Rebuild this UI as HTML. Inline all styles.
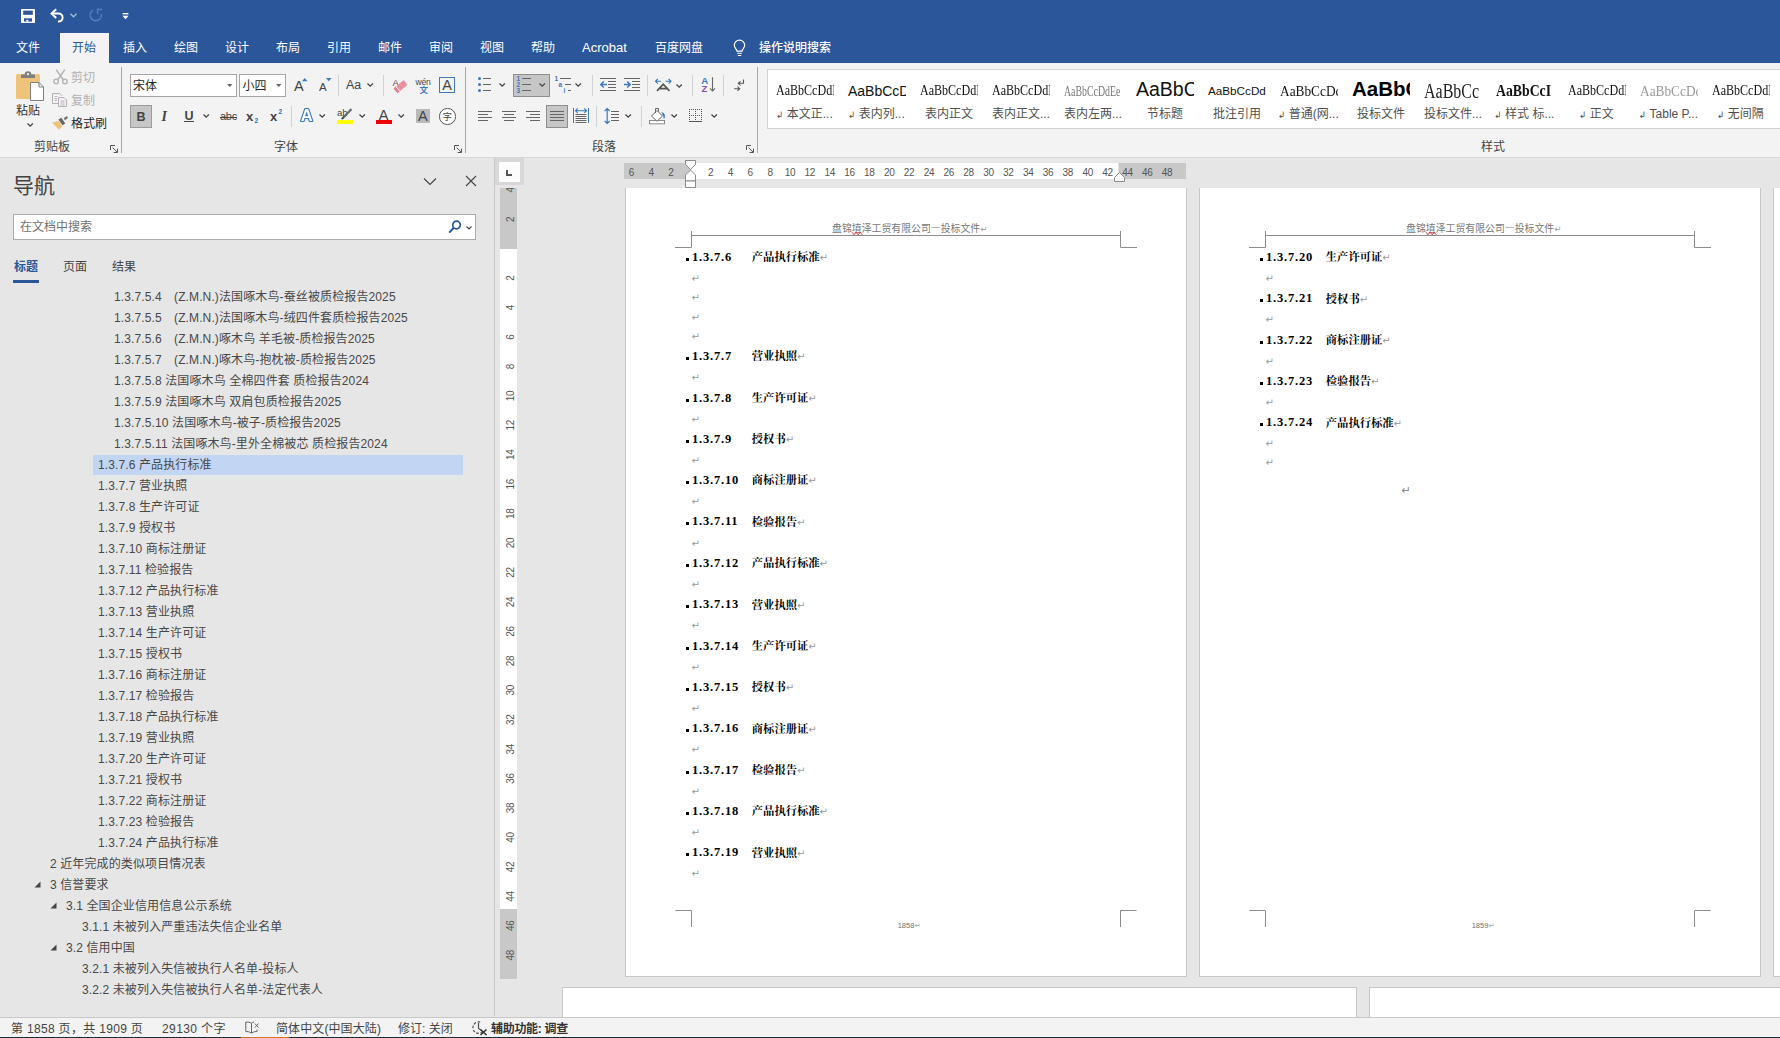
<!DOCTYPE html>
<html lang="zh-CN"><head><meta charset="utf-8"><title>Word</title>
<style>
html,body{margin:0;padding:0;}
body{width:1780px;height:1038px;overflow:hidden;background:#e6e6e6;font-family:"Liberation Sans","Noto Sans CJK SC",sans-serif;font-size:12px;color:#444;position:relative;}
.r{position:absolute;box-sizing:border-box;}
.t{position:absolute;white-space:nowrap;box-sizing:border-box;}
.s{font-family:"Liberation Serif","Noto Serif CJK SC",serif;}
svg{overflow:visible;}
</style></head><body>

<div class="r" style="left:0px;top:0px;width:1780px;height:63px;background:#2b579a;"></div>
<div class="r" style="left:60px;top:33px;width:49px;height:30px;background:#f3f3f3;"></div>
<div class="t " style="left:16px;top:39.2px;height:18px;line-height:18px;font-size:12px;color:#fff;">文件</div>
<div class="t " style="left:72px;top:39.2px;height:18px;line-height:18px;font-size:12px;color:#2b579a;">开始</div>
<div class="t " style="left:123px;top:39.2px;height:18px;line-height:18px;font-size:12px;color:#fff;">插入</div>
<div class="t " style="left:174px;top:39.2px;height:18px;line-height:18px;font-size:12px;color:#fff;">绘图</div>
<div class="t " style="left:225px;top:39.2px;height:18px;line-height:18px;font-size:12px;color:#fff;">设计</div>
<div class="t " style="left:276px;top:39.2px;height:18px;line-height:18px;font-size:12px;color:#fff;">布局</div>
<div class="t " style="left:327px;top:39.2px;height:18px;line-height:18px;font-size:12px;color:#fff;">引用</div>
<div class="t " style="left:378px;top:39.2px;height:18px;line-height:18px;font-size:12px;color:#fff;">邮件</div>
<div class="t " style="left:429px;top:39.2px;height:18px;line-height:18px;font-size:12px;color:#fff;">审阅</div>
<div class="t " style="left:480px;top:39.2px;height:18px;line-height:18px;font-size:12px;color:#fff;">视图</div>
<div class="t " style="left:531px;top:39.2px;height:18px;line-height:18px;font-size:12px;color:#fff;">帮助</div>
<div class="t " style="left:655px;top:39.2px;height:18px;line-height:18px;font-size:12px;color:#fff;">百度网盘</div>
<div class="t " style="left:759px;top:39.2px;height:18px;line-height:18px;font-size:12px;color:#fff;font-weight:500;">操作说明搜索</div>
<div class="t " style="left:582px;top:37.9px;height:19px;line-height:19px;font-size:13px;color:#fff;">Acrobat</div>
<svg class="r" style="left:21px;top:9px;" width="14" height="14" viewBox="0 0 14 14"><rect x="0" y="0" width="14" height="14" rx="0.6" fill="#fff"/><rect x="2.2" y="1.6" width="9.6" height="4.2" fill="#2b579a"/><rect x="3" y="9.3" width="8" height="3.3" fill="#2b579a"/><rect x="5.2" y="10.9" width="2.2" height="1.7" fill="#fff"/></svg>
<svg class="r" style="left:50px;top:8px;" width="15" height="15" viewBox="0 0 15 15"><path d="M2 5.6h6.6a4 4 0 0 1 0 8H8" fill="none" stroke="#fff" stroke-width="2"/><path d="M6.2 1.2L1.6 5.6l4.6 4.4" fill="none" stroke="#fff" stroke-width="2"/></svg>
<svg class="r" style="left:70px;top:13px;" width="7" height="5" viewBox="0 0 7 5"><path d="M0.5 0.8L3.5 3.8L6.5 0.8" fill="none" stroke="#a9bcdc" stroke-width="1.3"/></svg>
<svg class="r" style="left:89px;top:8px;" width="14" height="15" viewBox="0 0 14 15"><path d="M4 2.2A5.6 5.6 0 1 0 12.3 6" fill="none" stroke="#4f7bbd" stroke-width="1.7"/><path d="M8.6 6V1.4h4.6" fill="none" stroke="#4f7bbd" stroke-width="1.6"/></svg>
<svg class="r" style="left:122px;top:12px;" width="7" height="8" viewBox="0 0 7 8"><path d="M0.6 1.7h5.8" stroke="#fff" stroke-width="1.4"/><path d="M0.4 3.8h6.2L3.5 7.2z" fill="#fff"/></svg>
<svg class="r" style="left:733px;top:40px;" width="13" height="17" viewBox="0 0 13 17"><path d="M4 11.2c0-2-2.7-3-2.7-5.9a5.2 5.2 0 0 1 10.4 0c0 2.9-2.7 3.9-2.7 5.900z" fill="none" stroke="#fff" stroke-width="1.2"/><path d="M4.2 13.3h4.6M4.8 15.5h3.4" stroke="#fff" stroke-width="1.1"/></svg>
<div class="r" style="left:0px;top:63px;width:1780px;height:94px;background:#f3f3f3;"></div>
<div class="r" style="left:0px;top:157px;width:1780px;height:1px;background:#d6d6d6;"></div>
<svg class="r" style="left:16px;top:71px;" width="28" height="30" viewBox="0 0 28 30"><rect x="0" y="3" width="24" height="25" rx="1.4" fill="#eec47c"/><path d="M5 7V4.6Q5 3.6 6 3.6H8.7A3.3 3.3 0 0 1 15.3 3.600H18Q19 3.600 19 4.600V7z" fill="#7f7f7f"/><circle cx="12" cy="3.200" r="1.1" fill="#f3f3f3"/><path d="M14.500 11.500H23L27.500 16V29.500H14.500z" fill="#fff" stroke="#7f7f7f" stroke-width="1"/><path d="M23 11.500V16H27.500" fill="none" stroke="#7f7f7f" stroke-width="1"/></svg>
<div class="t " style="left:16px;top:102.2px;height:18px;line-height:18px;font-size:12px;color:#333;">粘贴</div>
<svg class="r" style="left:26.5px;top:123.2px;" width="6.4" height="4" viewBox="0 0 6.4 4"><path d="M0.5 0.5L3.2 3.2L5.900 0.5" fill="none" stroke="#444" stroke-width="1.25"/></svg>
<svg class="r" style="left:52.5px;top:69px;" width="15" height="15.5" viewBox="0 0 15 15.5"><path d="M3.200 0.600L10.600 11.200M11.800 0.600L4.400 11.200" stroke="#b3b1b3" stroke-width="1.5" fill="none"/><circle cx="3.100" cy="12.400" r="2.300" fill="none" stroke="#b3b1b3" stroke-width="1.300"/><circle cx="11.900" cy="12.400" r="2.300" fill="none" stroke="#b3b1b3" stroke-width="1.300"/></svg>
<div class="t " style="left:71px;top:69.3px;height:18px;line-height:18px;font-size:12px;color:#b1b1b1;">剪切</div>
<svg class="r" style="left:52px;top:93px;" width="15.5" height="14.5" viewBox="0 0 15.5 14.5"><path d="M9.500 3V2.500L7.500 0.500H0.500V10.500H6.500" fill="#f8f0f8" stroke="#b3b1b3" stroke-width="1"/><path d="M6.500 4.500H12L14.500 7V13.500H6.500z" fill="#f8f0f8" stroke="#b3b1b3" stroke-width="1"/><path d="M2.500 3.500H5.500M2.500 5.500H5M2.500 7.500H5M8.500 8H12.500M8.500 10H12.500M8.500 12H12.500" stroke="#b3b1b3" stroke-width="0.9"/></svg>
<div class="t " style="left:71px;top:92.1px;height:18px;line-height:18px;font-size:12px;color:#b1b1b1;">复制</div>
<svg class="r" style="left:52px;top:116px;" width="16.5" height="14" viewBox="0 0 16.5 14"><path d="M0 6.800L6.500 4.800L10.300 10.200L7 13.800z" fill="#eec47c"/><path d="M6.400 3.400L9.300 1.700L13.300 7.400L10.500 9.300z" fill="#666"/><path d="M11.600 2.300L14.800 0L16.200 2L13 4.300z" fill="#7a7a7a"/></svg>
<div class="t " style="left:71px;top:115.0px;height:18px;line-height:18px;font-size:12px;color:#262626;">格式刷</div>
<div class="t " style="left:34px;top:138.2px;height:18px;line-height:18px;font-size:12px;color:#444;">剪贴板</div>
<svg class="r" style="left:110px;top:145px;" width="8" height="8" viewBox="0 0 8 8"><path d="M0.5 5V0.5H5" fill="none" stroke="#555" stroke-width="1"/><path d="M2.6 2.6L7 7M7.5 3.6V7.5H3.6" fill="none" stroke="#555" stroke-width="1"/></svg>
<div class="r" style="left:121px;top:67px;width:1px;height:86px;background:#a8a8a8;"></div>
<div class="r" style="left:130px;top:74px;width:107px;height:23px;background:#fff;border:1px solid #a6a6a6;"></div>
<div class="t " style="left:133px;top:77.3px;height:18px;line-height:18px;font-size:12px;color:#262626;">宋体</div>
<svg class="r" style="left:227px;top:84px;" width="5.5" height="3" viewBox="0 0 5.5 3"><path d="M0 0H5.500L2.750 3z" fill="#666"/></svg>
<div class="r" style="left:239px;top:74px;width:47px;height:23px;background:#fff;border:1px solid #a6a6a6;"></div>
<div class="t " style="left:242.5px;top:77.3px;height:18px;line-height:18px;font-size:12px;color:#262626;">小四</div>
<svg class="r" style="left:276px;top:84px;" width="5.5" height="3" viewBox="0 0 5.5 3"><path d="M0 0H5.500L2.750 3z" fill="#666"/></svg>
<div class="r" style="left:130px;top:105px;width:22px;height:23px;background:#c6c6c6;border:1px solid #9c9c9c;"></div>
<div class="t " style="left:136.5px;top:107.5px;height:18.5px;line-height:18.5px;font-size:12.5px;color:#444;font-weight:bold;">B</div>
<div class="t " style="left:161.5px;top:106.7px;height:20px;line-height:20px;font-size:14px;color:#444;font-weight:bold;font-style:italic;font-family:'Liberation Serif',serif;">I</div>
<div class="t " style="left:184.5px;top:106.8px;height:18.5px;line-height:18.5px;font-size:12.5px;color:#444;font-weight:bold;">U</div>
<div class="r" style="left:184px;top:121px;width:9.5px;height:1px;background:#444;"></div>
<svg class="r" style="left:203.3px;top:113.9px;" width="6.4" height="4" viewBox="0 0 6.4 4"><path d="M0.5 0.5L3.2 3.2L5.900 0.5" fill="none" stroke="#444" stroke-width="1.25"/></svg>
<div class="t " style="left:220px;top:108.2px;height:17px;line-height:17px;font-size:11px;color:#444;letter-spacing:-0.300px;">abc</div>
<div class="r" style="left:219.5px;top:116.5px;width:17.5px;height:1px;background:#444;"></div>
<div class="t " style="left:246px;top:106.7px;height:19px;line-height:19px;font-size:13px;color:#444;font-weight:bold;">x</div>
<div class="t " style="left:254.5px;top:114.5px;height:12.5px;line-height:12.5px;font-size:6.5px;color:#2b6cbf;font-weight:bold;">2</div>
<div class="t " style="left:270px;top:106.7px;height:19px;line-height:19px;font-size:13px;color:#444;font-weight:bold;">x</div>
<div class="t " style="left:278.5px;top:106.0px;height:12.5px;line-height:12.5px;font-size:6.5px;color:#2b6cbf;font-weight:bold;">2</div>
<div class="r" style="left:291px;top:106px;width:1px;height:21px;background:#d1d1d1;"></div>
<div class="t " style="left:294px;top:76.2px;height:20.5px;line-height:20.5px;font-size:14.5px;color:#444;">A</div>
<svg class="r" style="left:302px;top:78px;" width="5.5" height="3.2" viewBox="0 0 5.5 3.2"><path d="M0 3.2H5.5L2.75 0z" fill="#3a78c0"/></svg>
<div class="t " style="left:319px;top:79.0px;height:17.5px;line-height:17.5px;font-size:11.5px;color:#444;">A</div>
<svg class="r" style="left:326px;top:78px;" width="5.5" height="3.2" viewBox="0 0 5.5 3.2"><path d="M0 0H5.5L2.75 3.2z" fill="#3a78c0"/></svg>
<div class="r" style="left:338px;top:75px;width:1px;height:21px;background:#d1d1d1;"></div>
<div class="t " style="left:346px;top:76.0px;height:18.5px;line-height:18.5px;font-size:12.5px;color:#444;">Aa</div>
<svg class="r" style="left:366.6px;top:83.10000000000001px;" width="6.4" height="4" viewBox="0 0 6.4 4"><path d="M0.5 0.5L3.2 3.2L5.900 0.5" fill="none" stroke="#444" stroke-width="1.25"/></svg>
<div class="r" style="left:383px;top:75px;width:1px;height:21px;background:#d1d1d1;"></div>
<div class="t " style="left:392.5px;top:75.0px;height:15.5px;line-height:15.5px;font-size:9.5px;color:#555;">A</div>
<svg class="r" style="left:393px;top:80px;" width="15" height="13" viewBox="0 0 15 13"><g transform="rotate(-40 7.500 6.500)"><rect x="1" y="3.500" width="13" height="6.200" rx="1" fill="#e8909e"/><rect x="1" y="3.500" width="3" height="6.200" rx="1" fill="#e47f90"/><rect x="3.600" y="3.500" width="0.900" height="6.200" fill="#f3f3f3"/></g></svg>
<div class="t " style="left:415.5px;top:74.7px;height:14.5px;line-height:14.5px;font-size:8.5px;color:#444;letter-spacing:-0.2px;">wén</div>
<div class="t " style="left:419.5px;top:83.2px;height:14.5px;line-height:14.5px;font-size:8.5px;color:#3a78c0;font-weight:bold;">文</div>
<div class="r" style="left:439px;top:77px;width:16px;height:16px;border:1px solid #3f78bd;"></div>
<div class="t " style="left:442.2px;top:74.8px;height:20.5px;line-height:20.5px;font-size:14.5px;color:#444;">A</div>
<svg class="r" style="left:0px;top:0px;" width="1" height="1" viewBox="0 0 1 1"><text x="300.800" y="121.300" font-size="16.500" font-weight="bold" font-family="Liberation Sans,sans-serif" fill="#fff" stroke="#3a78c0" stroke-width="2.200" stroke-linejoin="round" paint-order="stroke" style="filter:drop-shadow(0 0 0.600px #8fb6e6)">A</text></svg>
<svg class="r" style="left:319.3px;top:114.10000000000001px;" width="6.4" height="4" viewBox="0 0 6.4 4"><path d="M0.5 0.5L3.2 3.2L5.900 0.5" fill="none" stroke="#444" stroke-width="1.25"/></svg>
<div class="t " style="left:337px;top:105.0px;height:15.5px;line-height:15.5px;font-size:9.5px;color:#444;">ab</div>
<svg class="r" style="left:340px;top:108px;" width="13" height="12" viewBox="0 0 13 12"><path d="M11.500 1L2.500 10.500" stroke="#6a6a6a" stroke-width="2.200"/><path d="M3.800 8.600L1.600 11.200" stroke="#444" stroke-width="1.400"/></svg>
<div class="r" style="left:337px;top:120px;width:16px;height:4px;background:#ffff00;"></div>
<svg class="r" style="left:359.3px;top:114.10000000000001px;" width="6.4" height="4" viewBox="0 0 6.4 4"><path d="M0.5 0.5L3.2 3.2L5.900 0.5" fill="none" stroke="#444" stroke-width="1.25"/></svg>
<div class="t " style="left:378.7px;top:104.5px;height:20.5px;line-height:20.5px;font-size:14.5px;color:#444;">A</div>
<div class="r" style="left:376px;top:120px;width:16px;height:4px;background:#ec0000;"></div>
<svg class="r" style="left:398.3px;top:114.10000000000001px;" width="6.4" height="4" viewBox="0 0 6.4 4"><path d="M0.5 0.5L3.2 3.2L5.900 0.5" fill="none" stroke="#444" stroke-width="1.25"/></svg>
<div class="r" style="left:416px;top:109px;width:14px;height:14px;background:#b9b9b9;"></div>
<div class="t " style="left:418px;top:105.5px;height:20.5px;line-height:20.5px;font-size:14.5px;color:#444;">A</div>
<div class="r" style="left:439px;top:108px;width:16.5px;height:16.5px;background:#fff;border:1px solid #555;border-radius:50%;"></div>
<div class="t " style="left:442.7px;top:110.0px;height:15px;line-height:15px;font-size:9px;color:#444;">字</div>
<div class="t " style="left:274px;top:138.2px;height:18px;line-height:18px;font-size:12px;color:#444;">字体</div>
<svg class="r" style="left:454px;top:145px;" width="8" height="8" viewBox="0 0 8 8"><path d="M0.5 5V0.5H5" fill="none" stroke="#555" stroke-width="1"/><path d="M2.6 2.6L7 7M7.5 3.6V7.5H3.6" fill="none" stroke="#555" stroke-width="1"/></svg>
<div class="r" style="left:465px;top:67px;width:1px;height:86px;background:#a8a8a8;"></div>
<svg class="r" style="left:0px;top:0px;" width="1" height="1" viewBox="0 0 1 1"><circle cx="479.5" cy="78.5" r="1.5" fill="#3a78c0"/><path d="M483 78.5H491" stroke="#666" stroke-width="1"/><circle cx="479.5" cy="84.5" r="1.5" fill="#3a78c0"/><path d="M483 84.5H491" stroke="#666" stroke-width="1"/><circle cx="479.5" cy="90.5" r="1.5" fill="#3a78c0"/><path d="M483 90.5H491" stroke="#666" stroke-width="1"/></svg>
<svg class="r" style="left:499.3px;top:83.3px;" width="6.4" height="4" viewBox="0 0 6.4 4"><path d="M0.5 0.5L3.2 3.2L5.900 0.5" fill="none" stroke="#444" stroke-width="1.25"/></svg>
<div class="r" style="left:513px;top:74px;width:37px;height:23px;background:#c6c6c6;border:1px solid #8e8e8e;"></div>
<svg class="r" style="left:0px;top:0px;" width="1" height="1" viewBox="0 0 1 1"><text x="516.5" y="80.9" font-size="6.5" font-weight="bold" fill="#3a78c0" font-family="Liberation Sans,sans-serif">1</text><path d="M522 78.5H531" stroke="#666" stroke-width="1"/><text x="516.5" y="86.9" font-size="6.5" font-weight="bold" fill="#3a78c0" font-family="Liberation Sans,sans-serif">2</text><path d="M522 84.5H531" stroke="#666" stroke-width="1"/><text x="516.5" y="92.9" font-size="6.5" font-weight="bold" fill="#3a78c0" font-family="Liberation Sans,sans-serif">3</text><path d="M522 90.5H531" stroke="#666" stroke-width="1"/></svg>
<svg class="r" style="left:538.5999999999999px;top:83.3px;" width="6.4" height="4" viewBox="0 0 6.4 4"><path d="M0.5 0.5L3.2 3.2L5.900 0.5" fill="none" stroke="#444" stroke-width="1.25"/></svg>
<svg class="r" style="left:0px;top:0px;" width="1" height="1" viewBox="0 0 1 1"><text x="554.5" y="81" font-size="6.5" font-weight="bold" fill="#3a78c0" font-family="Liberation Sans,sans-serif">1</text><path d="M560 78.5H571" stroke="#666" stroke-width="1"/><text x="558.5" y="86.5" font-size="6.5" font-weight="bold" fill="#3a78c0" font-family="Liberation Sans,sans-serif">a</text><path d="M565 84.5H571" stroke="#666" stroke-width="1"/><text x="563.5" y="92.5" font-size="6.5" font-weight="bold" fill="#3a78c0" font-family="Liberation Sans,sans-serif">i</text><path d="M568 90.5H571" stroke="#666" stroke-width="1"/></svg>
<svg class="r" style="left:575.3px;top:83.3px;" width="6.4" height="4" viewBox="0 0 6.4 4"><path d="M0.5 0.5L3.2 3.2L5.900 0.5" fill="none" stroke="#444" stroke-width="1.25"/></svg>
<div class="r" style="left:592px;top:75px;width:1px;height:21px;background:#d1d1d1;"></div>
<svg class="r" style="left:0px;top:0px;" width="1" height="1" viewBox="0 0 1 1"><path d="M600 78.5H616" stroke="#666" stroke-width="1"/><path d="M608 81.5H616" stroke="#666" stroke-width="1"/><path d="M608 84.5H616" stroke="#666" stroke-width="1"/><path d="M608 87.5H616" stroke="#666" stroke-width="1"/><path d="M600 90.5H616" stroke="#666" stroke-width="1"/><path d="M607 84.500H601M603.800 81.500L600.800 84.500L603.800 87.500" fill="none" stroke="#3a78c0" stroke-width="1.500"/><path d="M624 78.5H640" stroke="#666" stroke-width="1"/><path d="M632 81.5H640" stroke="#666" stroke-width="1"/><path d="M632 84.5H640" stroke="#666" stroke-width="1"/><path d="M632 87.5H640" stroke="#666" stroke-width="1"/><path d="M624 90.5H640" stroke="#666" stroke-width="1"/><path d="M624 84.500H630M627.200 81.500L630.200 84.500L627.200 87.500" fill="none" stroke="#3a78c0" stroke-width="1.500"/></svg>
<div class="r" style="left:647px;top:75px;width:1px;height:21px;background:#d1d1d1;"></div>
<svg class="r" style="left:0px;top:0px;" width="1" height="1" viewBox="0 0 1 1"><path d="M655.500 81.300H661M657.800 79L655.500 81.300L657.800 83.600M665.500 81.300H671M668.700 79L671 81.300L668.700 83.600" fill="none" stroke="#3a78c0" stroke-width="1.100"/><path d="M657 90.800L663.200 84.200L669.500 90.800M659.500 88.700H667" fill="none" stroke="#555" stroke-width="1.700"/></svg>
<svg class="r" style="left:675.5px;top:83.5px;" width="6.4" height="4" viewBox="0 0 6.4 4"><path d="M0.5 0.5L3.2 3.2L5.900 0.5" fill="none" stroke="#444" stroke-width="1.25"/></svg>
<div class="r" style="left:692px;top:75px;width:1px;height:21px;background:#d1d1d1;"></div>
<svg class="r" style="left:0px;top:0px;" width="1" height="1" viewBox="0 0 1 1"><text x="701.300" y="83.700" font-size="9.5" font-weight="bold" fill="#3a78c0" font-family="Liberation Sans,sans-serif">A</text><text x="701.600" y="91.800" font-size="9.5" font-weight="bold" fill="#8a4fb8" font-family="Liberation Sans,sans-serif">Z</text><path d="M712.500 77.300V91M710 88.300L712.500 91L715 88.300" fill="none" stroke="#666" stroke-width="1.100"/></svg>
<div class="r" style="left:723px;top:75px;width:1px;height:21px;background:#d1d1d1;"></div>
<svg class="r" style="left:0px;top:0px;" width="1" height="1" viewBox="0 0 1 1"><path d="M743.500 79.400V83.300H738.500M740.500 81.300L738.300 83.300L740.500 85.300" fill="none" stroke="#555" stroke-width="1.100"/><path d="M734.200 88.700H739.500M737.500 86.600L739.700 88.700L737.500 90.800" fill="none" stroke="#555" stroke-width="1.100"/></svg>
<svg class="r" style="left:0px;top:0px;" width="1" height="1" viewBox="0 0 1 1"><path d="M478 111.5H492" stroke="#666" stroke-width="1"/><path d="M502 111.5H516" stroke="#666" stroke-width="1"/><path d="M526 111.5H540" stroke="#666" stroke-width="1"/><path d="M478 114.5H488" stroke="#666" stroke-width="1"/><path d="M504 114.5H514" stroke="#666" stroke-width="1"/><path d="M530 114.5H540" stroke="#666" stroke-width="1"/><path d="M478 117.5H492" stroke="#666" stroke-width="1"/><path d="M502 117.5H516" stroke="#666" stroke-width="1"/><path d="M526 117.5H540" stroke="#666" stroke-width="1"/><path d="M478 120.5H488" stroke="#666" stroke-width="1"/><path d="M504 120.5H514" stroke="#666" stroke-width="1"/><path d="M530 120.5H540" stroke="#666" stroke-width="1"/></svg>
<div class="r" style="left:546px;top:105px;width:22px;height:23px;background:#c6c6c6;border:1px solid #8e8e8e;"></div>
<svg class="r" style="left:0px;top:0px;" width="1" height="1" viewBox="0 0 1 1"><path d="M550 111.5H564" stroke="#666" stroke-width="1"/><path d="M550 114.5H564" stroke="#666" stroke-width="1"/><path d="M550 117.5H564" stroke="#666" stroke-width="1"/><path d="M550 120.5H564" stroke="#666" stroke-width="1"/><path d="M573.500 108V123M588.500 108V123" stroke="#3a78c0" stroke-width="1"/><path d="M575.500 110.700H586.500M577.700 108.500L575.500 110.700L577.700 112.900M584.300 108.500L586.500 110.700L584.300 112.900" fill="none" stroke="#3a78c0" stroke-width="1.100"/><path d="M575.5 114.5H586.5" stroke="#666" stroke-width="1"/><path d="M575.5 116.5H586.5" stroke="#666" stroke-width="1"/><path d="M575.5 118.5H586.5" stroke="#666" stroke-width="1"/><path d="M575.5 120.5H586.5" stroke="#666" stroke-width="1"/><path d="M575.5 122.5H586.5" stroke="#666" stroke-width="1"/></svg>
<div class="r" style="left:596px;top:106px;width:1px;height:21px;background:#d1d1d1;"></div>
<svg class="r" style="left:0px;top:0px;" width="1" height="1" viewBox="0 0 1 1"><path d="M607.200 108.500V123.500M604.700 111L607.200 108.500L609.700 111M604.700 121L607.200 123.500L609.700 121" fill="none" stroke="#3a78c0" stroke-width="1.200"/><path d="M611 111.5H619" stroke="#666" stroke-width="1"/><path d="M611 114.5H619" stroke="#666" stroke-width="1"/><path d="M611 117.5H619" stroke="#666" stroke-width="1"/><path d="M611 120.5H619" stroke="#666" stroke-width="1"/></svg>
<svg class="r" style="left:624.5px;top:114.0px;" width="6.4" height="4" viewBox="0 0 6.4 4"><path d="M0.5 0.5L3.2 3.2L5.900 0.5" fill="none" stroke="#444" stroke-width="1.25"/></svg>
<div class="r" style="left:641px;top:106px;width:1px;height:21px;background:#d1d1d1;"></div>
<svg class="r" style="left:0px;top:0px;" width="1" height="1" viewBox="0 0 1 1"><rect x="649.500" y="120.500" width="15" height="3.300" fill="#fff" stroke="#8a8a8a" stroke-width="1"/><path d="M657 110.500L662.500 116L657 121.300L651.500 116z" fill="#fff" stroke="#666" stroke-width="1"/><path d="M655.500 113V108.500H658.500V111.500" fill="none" stroke="#666" stroke-width="1"/><path d="M661.300 111.800Q666.800 113.500 664 119.600Q663.300 115.500 661.300 111.800z" fill="#3a78c0"/></svg>
<svg class="r" style="left:671.3px;top:114.0px;" width="6.4" height="4" viewBox="0 0 6.4 4"><path d="M0.5 0.5L3.2 3.2L5.900 0.5" fill="none" stroke="#444" stroke-width="1.25"/></svg>
<svg class="r" style="left:0px;top:0px;" width="1" height="1" viewBox="0 0 1 1"><path d="M689 109.500H702M689 115.500H702M689.500 109V121M695.500 109V121M701.500 109V121" fill="none" stroke="#555" stroke-width="1" stroke-dasharray="1 1"/><path d="M689 121.500H702" stroke="#555" stroke-width="1"/></svg>
<svg class="r" style="left:710.5px;top:114.0px;" width="6.4" height="4" viewBox="0 0 6.4 4"><path d="M0.5 0.5L3.2 3.2L5.900 0.5" fill="none" stroke="#444" stroke-width="1.25"/></svg>
<div class="t " style="left:592px;top:138.2px;height:18px;line-height:18px;font-size:12px;color:#444;">段落</div>
<svg class="r" style="left:746px;top:145px;" width="8" height="8" viewBox="0 0 8 8"><path d="M0.5 5V0.5H5" fill="none" stroke="#555" stroke-width="1"/><path d="M2.6 2.6L7 7M7.5 3.6V7.5H3.6" fill="none" stroke="#555" stroke-width="1"/></svg>
<div class="r" style="left:757px;top:67px;width:1px;height:86px;background:#a8a8a8;"></div>
<div class="r" style="left:767px;top:69px;width:1020px;height:60px;background:#fff;border:1px solid #d2d2d2;"></div>
<div class="r" style="left:776px;top:75.9px;width:58px;height:30px;overflow:hidden;"><div class="t" style="left:0;top:0;height:30px;line-height:30px;font-size:14px;color:#111;font-family:'Liberation Serif',serif;transform:scaleX(0.86);transform-origin:0 50%;">AaBbCcDdI</div></div>
<div class="t" style="left:769px;top:105.4px;width:72px;height:18px;line-height:18px;text-align:center;font-size:12px;color:#505050;"><span style="font-family:'DejaVu Sans',sans-serif;font-size:9px;position:relative;top:-0.5px;margin-right:3.5px;margin-left:-1.500px;">↲</span>本文正...</div>
<div class="r" style="left:848px;top:75.7px;width:58px;height:30px;overflow:hidden;"><div class="t" style="left:0;top:0;height:30px;line-height:30px;font-size:14px;color:#111;font-family:'Liberation Sans',sans-serif;">AaBbCcD</div></div>
<div class="t" style="left:841px;top:105.4px;width:72px;height:18px;line-height:18px;text-align:center;font-size:12px;color:#505050;"><span style="font-family:'DejaVu Sans',sans-serif;font-size:9px;position:relative;top:-0.5px;margin-right:3.5px;margin-left:-1.500px;">↲</span>表内列...</div>
<div class="r" style="left:920px;top:75.9px;width:58px;height:30px;overflow:hidden;"><div class="t" style="left:0;top:0;height:30px;line-height:30px;font-size:14px;color:#111;font-family:'Liberation Serif',serif;transform:scaleX(0.86);transform-origin:0 50%;">AaBbCcDdI</div></div>
<div class="t" style="left:913px;top:105.4px;width:72px;height:18px;line-height:18px;text-align:center;font-size:12px;color:#505050;">表内正文</div>
<div class="r" style="left:992px;top:75.9px;width:58px;height:30px;overflow:hidden;"><div class="t" style="left:0;top:0;height:30px;line-height:30px;font-size:14px;color:#111;font-family:'Liberation Serif',serif;transform:scaleX(0.86);transform-origin:0 50%;">AaBbCcDdI</div></div>
<div class="t" style="left:985px;top:105.4px;width:72px;height:18px;line-height:18px;text-align:center;font-size:12px;color:#505050;">表内正文...</div>
<div class="r" style="left:1064px;top:75.9px;width:58px;height:30px;overflow:hidden;"><div class="t" style="left:0;top:0;height:30px;line-height:30px;font-size:14.5px;color:#7a7a7a;font-family:'Liberation Serif',serif;transform:scaleX(0.68);transform-origin:0 50%;">AaBbCcDdEe</div></div>
<div class="t" style="left:1057px;top:105.4px;width:72px;height:18px;line-height:18px;text-align:center;font-size:12px;color:#505050;">表内左两...</div>
<div class="r" style="left:1136px;top:74.2px;width:58px;height:30px;overflow:hidden;"><div class="t" style="left:0;top:0;height:30px;line-height:30px;font-size:19.5px;color:#111;font-family:'Liberation Sans',sans-serif;">AaBbC</div></div>
<div class="t" style="left:1129px;top:105.4px;width:72px;height:18px;line-height:18px;text-align:center;font-size:12px;color:#505050;">节标题</div>
<div class="r" style="left:1208px;top:76.2px;width:58px;height:30px;overflow:hidden;"><div class="t" style="left:0;top:0;height:30px;line-height:30px;font-size:11.7px;color:#111;font-family:'Liberation Sans',sans-serif;">AaBbCcDd</div></div>
<div class="t" style="left:1201px;top:105.4px;width:72px;height:18px;line-height:18px;text-align:center;font-size:12px;color:#505050;">批注引用</div>
<div class="r" style="left:1280px;top:75.9px;width:58px;height:30px;overflow:hidden;"><div class="t" style="left:0;top:0;height:30px;line-height:30px;font-size:15.5px;color:#111;font-family:'Liberation Serif',serif;transform:scaleX(0.86);transform-origin:0 50%;">AaBbCcDc</div></div>
<div class="t" style="left:1273px;top:105.4px;width:72px;height:18px;line-height:18px;text-align:center;font-size:12px;color:#505050;"><span style="font-family:'DejaVu Sans',sans-serif;font-size:9px;position:relative;top:-0.5px;margin-right:3.5px;margin-left:-1.500px;">↲</span>普通(网...</div>
<div class="r" style="left:1352px;top:74.2px;width:58px;height:30px;overflow:hidden;"><div class="t" style="left:0;top:0;height:30px;line-height:30px;font-size:20.5px;color:#000;font-family:'Liberation Sans',sans-serif;font-weight:bold;">AaBbC(</div></div>
<div class="t" style="left:1345px;top:105.4px;width:72px;height:18px;line-height:18px;text-align:center;font-size:12px;color:#505050;">投标文件</div>
<div class="r" style="left:1424px;top:75.9px;width:58px;height:30px;overflow:hidden;"><div class="t" style="left:0;top:0;height:30px;line-height:30px;font-size:20px;color:#222;font-family:'Liberation Serif',serif;transform:scaleX(0.8);transform-origin:0 50%;">AaBbCc</div></div>
<div class="t" style="left:1417px;top:105.4px;width:72px;height:18px;line-height:18px;text-align:center;font-size:12px;color:#505050;">投标文件...</div>
<div class="r" style="left:1496px;top:76.2px;width:58px;height:30px;overflow:hidden;"><div class="t" style="left:0;top:0;height:30px;line-height:30px;font-size:16px;color:#111;font-family:'Liberation Serif',serif;font-weight:bold;transform:scaleX(0.86);transform-origin:0 50%;">AaBbCcI</div></div>
<div class="t" style="left:1489px;top:105.4px;width:72px;height:18px;line-height:18px;text-align:center;font-size:12px;color:#505050;"><span style="font-family:'DejaVu Sans',sans-serif;font-size:9px;position:relative;top:-0.5px;margin-right:3.5px;margin-left:-1.500px;">↲</span>样式 标...</div>
<div class="r" style="left:1568px;top:75.9px;width:58px;height:30px;overflow:hidden;"><div class="t" style="left:0;top:0;height:30px;line-height:30px;font-size:14px;color:#111;font-family:'Liberation Serif',serif;transform:scaleX(0.86);transform-origin:0 50%;">AaBbCcDdI</div></div>
<div class="t" style="left:1561px;top:105.4px;width:72px;height:18px;line-height:18px;text-align:center;font-size:12px;color:#505050;"><span style="font-family:'DejaVu Sans',sans-serif;font-size:9px;position:relative;top:-0.5px;margin-right:3.5px;margin-left:-1.500px;">↲</span>正文</div>
<div class="r" style="left:1640px;top:75.9px;width:58px;height:30px;overflow:hidden;"><div class="t" style="left:0;top:0;height:30px;line-height:30px;font-size:15.5px;color:#9a9a9a;font-family:'Liberation Serif',serif;transform:scaleX(0.86);transform-origin:0 50%;">AaBbCcDc</div></div>
<div class="t" style="left:1633px;top:105.4px;width:72px;height:18px;line-height:18px;text-align:center;font-size:12px;color:#505050;"><span style="font-family:'DejaVu Sans',sans-serif;font-size:9px;position:relative;top:-0.5px;margin-right:3.5px;margin-left:-1.500px;">↲</span>Table P...</div>
<div class="r" style="left:1712px;top:75.9px;width:58px;height:30px;overflow:hidden;"><div class="t" style="left:0;top:0;height:30px;line-height:30px;font-size:14px;color:#111;font-family:'Liberation Serif',serif;transform:scaleX(0.86);transform-origin:0 50%;">AaBbCcDdI</div></div>
<div class="t" style="left:1705px;top:105.4px;width:72px;height:18px;line-height:18px;text-align:center;font-size:12px;color:#505050;"><span style="font-family:'DejaVu Sans',sans-serif;font-size:9px;position:relative;top:-0.5px;margin-right:3.5px;margin-left:-1.500px;">↲</span>无间隔</div>
<div class="t " style="left:1481px;top:138.2px;height:18px;line-height:18px;font-size:12px;color:#444;">样式</div>
<div class="r" style="left:494px;top:158px;width:1px;height:858px;background:#c8c8c8;"></div>
<div class="t " style="left:13px;top:171.7px;height:28px;line-height:28px;font-size:21px;color:#444;">导航</div>
<svg class="r" style="left:422.5px;top:177px;" width="14" height="9" viewBox="0 0 14 9"><path d="M1 1.5L7 7.5L13 1.5" fill="none" stroke="#444" stroke-width="1.1"/></svg>
<svg class="r" style="left:465px;top:175px;" width="12" height="12" viewBox="0 0 12 12"><path d="M1 1L11 11M11 1L1 11" fill="none" stroke="#444" stroke-width="1.1"/></svg>
<div class="r" style="left:13px;top:214px;width:463px;height:26px;background:#fff;border:1px solid #ababab;"></div>
<div class="t " style="left:20px;top:217.7px;height:18px;line-height:18px;font-size:12px;color:#707070;">在文档中搜索</div>
<svg class="r" style="left:448px;top:219.5px;" width="14" height="14" viewBox="0 0 14 14"><circle cx="8.500" cy="5" r="3.800" fill="none" stroke="#2b579a" stroke-width="1.700"/><path d="M5.800 7.800L1.200 12.600" stroke="#2b579a" stroke-width="2"/></svg>
<svg class="r" style="left:466px;top:225.5px;" width="6" height="4" viewBox="0 0 6 4"><path d="M0.5 0.5L3 3L5.500 0.500" fill="none" stroke="#444" stroke-width="1.100"/></svg>
<div class="t " style="left:14px;top:257.7px;height:18px;line-height:18px;font-size:12px;color:#2b579a;font-weight:bold;">标题</div>
<div class="t " style="left:63px;top:257.7px;height:18px;line-height:18px;font-size:12px;color:#444;">页面</div>
<div class="t " style="left:112px;top:257.7px;height:18px;line-height:18px;font-size:12px;color:#444;">结果</div>
<div class="r" style="left:13px;top:280px;width:26px;height:3px;background:#2b579a;"></div>
<div class="r" style="left:93px;top:455px;width:370px;height:20px;background:#c2d5f2;"></div>
<div class="t " style="left:114px;top:288.1px;height:18px;line-height:18px;font-size:12px;color:#484848;letter-spacing:0.12px;">1.3.7.5.4  (Z.M.N.)法国啄木鸟-蚕丝被质检报告2025</div>
<div class="t " style="left:114px;top:309.1px;height:18px;line-height:18px;font-size:12px;color:#484848;letter-spacing:0.12px;">1.3.7.5.5  (Z.M.N.)法国啄木鸟-绒四件套质检报告2025</div>
<div class="t " style="left:114px;top:330.1px;height:18px;line-height:18px;font-size:12px;color:#484848;letter-spacing:0.12px;">1.3.7.5.6  (Z.M.N.)啄木鸟 羊毛被-质检报告2025</div>
<div class="t " style="left:114px;top:351.1px;height:18px;line-height:18px;font-size:12px;color:#484848;letter-spacing:0.12px;">1.3.7.5.7  (Z.M.N.)啄木鸟-抱枕被-质检报告2025</div>
<div class="t " style="left:114px;top:372.1px;height:18px;line-height:18px;font-size:12px;color:#484848;letter-spacing:0.12px;">1.3.7.5.8 法国啄木鸟 全棉四件套 质检报告2024</div>
<div class="t " style="left:114px;top:393.1px;height:18px;line-height:18px;font-size:12px;color:#484848;letter-spacing:0.12px;">1.3.7.5.9 法国啄木鸟 双肩包质检报告2025</div>
<div class="t " style="left:114px;top:414.1px;height:18px;line-height:18px;font-size:12px;color:#484848;letter-spacing:0.12px;">1.3.7.5.10 法国啄木鸟-被子-质检报告2025</div>
<div class="t " style="left:114px;top:435.1px;height:18px;line-height:18px;font-size:12px;color:#484848;letter-spacing:0.12px;">1.3.7.5.11 法国啄木鸟-里外全棉被芯 质检报告2024</div>
<div class="t " style="left:98px;top:456.1px;height:18px;line-height:18px;font-size:12px;color:#484848;letter-spacing:0.12px;">1.3.7.6 产品执行标准</div>
<div class="t " style="left:98px;top:477.1px;height:18px;line-height:18px;font-size:12px;color:#484848;letter-spacing:0.12px;">1.3.7.7 营业执照</div>
<div class="t " style="left:98px;top:498.1px;height:18px;line-height:18px;font-size:12px;color:#484848;letter-spacing:0.12px;">1.3.7.8 生产许可证</div>
<div class="t " style="left:98px;top:519.1px;height:18px;line-height:18px;font-size:12px;color:#484848;letter-spacing:0.12px;">1.3.7.9 授权书</div>
<div class="t " style="left:98px;top:540.1px;height:18px;line-height:18px;font-size:12px;color:#484848;letter-spacing:0.12px;">1.3.7.10 商标注册证</div>
<div class="t " style="left:98px;top:561.1px;height:18px;line-height:18px;font-size:12px;color:#484848;letter-spacing:0.12px;">1.3.7.11 检验报告</div>
<div class="t " style="left:98px;top:582.1px;height:18px;line-height:18px;font-size:12px;color:#484848;letter-spacing:0.12px;">1.3.7.12 产品执行标准</div>
<div class="t " style="left:98px;top:603.1px;height:18px;line-height:18px;font-size:12px;color:#484848;letter-spacing:0.12px;">1.3.7.13 营业执照</div>
<div class="t " style="left:98px;top:624.1px;height:18px;line-height:18px;font-size:12px;color:#484848;letter-spacing:0.12px;">1.3.7.14 生产许可证</div>
<div class="t " style="left:98px;top:645.1px;height:18px;line-height:18px;font-size:12px;color:#484848;letter-spacing:0.12px;">1.3.7.15 授权书</div>
<div class="t " style="left:98px;top:666.1px;height:18px;line-height:18px;font-size:12px;color:#484848;letter-spacing:0.12px;">1.3.7.16 商标注册证</div>
<div class="t " style="left:98px;top:687.1px;height:18px;line-height:18px;font-size:12px;color:#484848;letter-spacing:0.12px;">1.3.7.17 检验报告</div>
<div class="t " style="left:98px;top:708.1px;height:18px;line-height:18px;font-size:12px;color:#484848;letter-spacing:0.12px;">1.3.7.18 产品执行标准</div>
<div class="t " style="left:98px;top:729.1px;height:18px;line-height:18px;font-size:12px;color:#484848;letter-spacing:0.12px;">1.3.7.19 营业执照</div>
<div class="t " style="left:98px;top:750.1px;height:18px;line-height:18px;font-size:12px;color:#484848;letter-spacing:0.12px;">1.3.7.20 生产许可证</div>
<div class="t " style="left:98px;top:771.1px;height:18px;line-height:18px;font-size:12px;color:#484848;letter-spacing:0.12px;">1.3.7.21 授权书</div>
<div class="t " style="left:98px;top:792.1px;height:18px;line-height:18px;font-size:12px;color:#484848;letter-spacing:0.12px;">1.3.7.22 商标注册证</div>
<div class="t " style="left:98px;top:813.1px;height:18px;line-height:18px;font-size:12px;color:#484848;letter-spacing:0.12px;">1.3.7.23 检验报告</div>
<div class="t " style="left:98px;top:834.1px;height:18px;line-height:18px;font-size:12px;color:#484848;letter-spacing:0.12px;">1.3.7.24 产品执行标准</div>
<div class="t " style="left:50px;top:855.1px;height:18px;line-height:18px;font-size:12px;color:#484848;letter-spacing:0.12px;">2 近年完成的类似项目情况表</div>
<div class="t " style="left:50px;top:876.1px;height:18px;line-height:18px;font-size:12px;color:#484848;letter-spacing:0.12px;">3 信誉要求</div>
<div class="t " style="left:66px;top:897.1px;height:18px;line-height:18px;font-size:12px;color:#484848;letter-spacing:0.12px;">3.1 全国企业信用信息公示系统</div>
<div class="t " style="left:82px;top:918.1px;height:18px;line-height:18px;font-size:12px;color:#484848;letter-spacing:0.12px;">3.1.1 未被列入严重违法失信企业名单</div>
<div class="t " style="left:66px;top:939.1px;height:18px;line-height:18px;font-size:12px;color:#484848;letter-spacing:0.12px;">3.2 信用中国</div>
<div class="t " style="left:82px;top:960.1px;height:18px;line-height:18px;font-size:12px;color:#484848;letter-spacing:0.12px;">3.2.1 未被列入失信被执行人名单-投标人</div>
<div class="t " style="left:82px;top:981.1px;height:18px;line-height:18px;font-size:12px;color:#484848;letter-spacing:0.12px;">3.2.2 未被列入失信被执行人名单-法定代表人</div>
<svg class="r" style="left:34px;top:880.5px;" width="7" height="7" viewBox="0 0 7 7"><path d="M6.500 0.500V6.500H0.500z" fill="#444"/></svg>
<svg class="r" style="left:50px;top:901.5px;" width="7" height="7" viewBox="0 0 7 7"><path d="M6.500 0.500V6.500H0.500z" fill="#444"/></svg>
<svg class="r" style="left:50px;top:943.5px;" width="7" height="7" viewBox="0 0 7 7"><path d="M6.500 0.500V6.500H0.500z" fill="#444"/></svg>
<div class="r" style="left:495px;top:158px;width:29px;height:27px;background:#d8d8d8;"></div>
<div class="r" style="left:498.5px;top:161.5px;width:21px;height:20px;background:#fcfcfc;"></div>
<svg class="r" style="left:506px;top:170px;" width="6" height="6" viewBox="0 0 6 6"><path d="M1 0V5H6" fill="none" stroke="#555" stroke-width="2"/></svg>
<div class="r" style="left:624px;top:163px;width:66.5px;height:16px;background:#c8c8c8;"></div>
<div class="r" style="left:690.5px;top:163px;width:427px;height:16px;background:#fff;"></div>
<div class="r" style="left:1119px;top:163px;width:67px;height:16px;background:#c8c8c8;"></div>
<div class="t " style="left:621.45px;top:166.7px;height:12px;line-height:12px;font-size:10px;color:#555;width:20px;font-family:'Liberation Sans',sans-serif;text-align:center;">6</div>
<div class="t " style="left:641.3px;top:166.7px;height:12px;line-height:12px;font-size:10px;color:#555;width:20px;font-family:'Liberation Sans',sans-serif;text-align:center;">4</div>
<div class="t " style="left:661.15px;top:166.7px;height:12px;line-height:12px;font-size:10px;color:#555;width:20px;font-family:'Liberation Sans',sans-serif;text-align:center;">2</div>
<div class="t " style="left:700.5500000000001px;top:166.7px;height:12px;line-height:12px;font-size:10px;color:#555;width:20px;font-family:'Liberation Sans',sans-serif;text-align:center;letter-spacing:-0.3px;">2</div>
<div class="t " style="left:720.4000000000001px;top:166.7px;height:12px;line-height:12px;font-size:10px;color:#555;width:20px;font-family:'Liberation Sans',sans-serif;text-align:center;letter-spacing:-0.3px;">4</div>
<div class="t " style="left:740.25px;top:166.7px;height:12px;line-height:12px;font-size:10px;color:#555;width:20px;font-family:'Liberation Sans',sans-serif;text-align:center;letter-spacing:-0.3px;">6</div>
<div class="t " style="left:760.1px;top:166.7px;height:12px;line-height:12px;font-size:10px;color:#555;width:20px;font-family:'Liberation Sans',sans-serif;text-align:center;letter-spacing:-0.3px;">8</div>
<div class="t " style="left:779.95px;top:166.7px;height:12px;line-height:12px;font-size:10px;color:#555;width:20px;font-family:'Liberation Sans',sans-serif;text-align:center;letter-spacing:-0.3px;">10</div>
<div class="t " style="left:799.8000000000001px;top:166.7px;height:12px;line-height:12px;font-size:10px;color:#555;width:20px;font-family:'Liberation Sans',sans-serif;text-align:center;letter-spacing:-0.3px;">12</div>
<div class="t " style="left:819.6500000000001px;top:166.7px;height:12px;line-height:12px;font-size:10px;color:#555;width:20px;font-family:'Liberation Sans',sans-serif;text-align:center;letter-spacing:-0.3px;">14</div>
<div class="t " style="left:839.5px;top:166.7px;height:12px;line-height:12px;font-size:10px;color:#555;width:20px;font-family:'Liberation Sans',sans-serif;text-align:center;letter-spacing:-0.3px;">16</div>
<div class="t " style="left:859.35px;top:166.7px;height:12px;line-height:12px;font-size:10px;color:#555;width:20px;font-family:'Liberation Sans',sans-serif;text-align:center;letter-spacing:-0.3px;">18</div>
<div class="t " style="left:879.2px;top:166.7px;height:12px;line-height:12px;font-size:10px;color:#555;width:20px;font-family:'Liberation Sans',sans-serif;text-align:center;letter-spacing:-0.3px;">20</div>
<div class="t " style="left:899.0500000000001px;top:166.7px;height:12px;line-height:12px;font-size:10px;color:#555;width:20px;font-family:'Liberation Sans',sans-serif;text-align:center;letter-spacing:-0.3px;">22</div>
<div class="t " style="left:918.9000000000001px;top:166.7px;height:12px;line-height:12px;font-size:10px;color:#555;width:20px;font-family:'Liberation Sans',sans-serif;text-align:center;letter-spacing:-0.3px;">24</div>
<div class="t " style="left:938.75px;top:166.7px;height:12px;line-height:12px;font-size:10px;color:#555;width:20px;font-family:'Liberation Sans',sans-serif;text-align:center;letter-spacing:-0.3px;">26</div>
<div class="t " style="left:958.6000000000001px;top:166.7px;height:12px;line-height:12px;font-size:10px;color:#555;width:20px;font-family:'Liberation Sans',sans-serif;text-align:center;letter-spacing:-0.3px;">28</div>
<div class="t " style="left:978.45px;top:166.7px;height:12px;line-height:12px;font-size:10px;color:#555;width:20px;font-family:'Liberation Sans',sans-serif;text-align:center;letter-spacing:-0.3px;">30</div>
<div class="t " style="left:998.3000000000001px;top:166.7px;height:12px;line-height:12px;font-size:10px;color:#555;width:20px;font-family:'Liberation Sans',sans-serif;text-align:center;letter-spacing:-0.3px;">32</div>
<div class="t " style="left:1018.1500000000001px;top:166.7px;height:12px;line-height:12px;font-size:10px;color:#555;width:20px;font-family:'Liberation Sans',sans-serif;text-align:center;letter-spacing:-0.3px;">34</div>
<div class="t " style="left:1038.0px;top:166.7px;height:12px;line-height:12px;font-size:10px;color:#555;width:20px;font-family:'Liberation Sans',sans-serif;text-align:center;letter-spacing:-0.3px;">36</div>
<div class="t " style="left:1057.8500000000001px;top:166.7px;height:12px;line-height:12px;font-size:10px;color:#555;width:20px;font-family:'Liberation Sans',sans-serif;text-align:center;letter-spacing:-0.3px;">38</div>
<div class="t " style="left:1077.7px;top:166.7px;height:12px;line-height:12px;font-size:10px;color:#555;width:20px;font-family:'Liberation Sans',sans-serif;text-align:center;letter-spacing:-0.3px;">40</div>
<div class="t " style="left:1097.55px;top:166.7px;height:12px;line-height:12px;font-size:10px;color:#555;width:20px;font-family:'Liberation Sans',sans-serif;text-align:center;letter-spacing:-0.3px;">42</div>
<div class="t " style="left:1117.4px;top:166.7px;height:12px;line-height:12px;font-size:10px;color:#555;width:20px;font-family:'Liberation Sans',sans-serif;text-align:center;letter-spacing:-0.3px;">44</div>
<div class="t " style="left:1137.25px;top:166.7px;height:12px;line-height:12px;font-size:10px;color:#555;width:20px;font-family:'Liberation Sans',sans-serif;text-align:center;letter-spacing:-0.3px;">46</div>
<div class="t " style="left:1157.1000000000001px;top:166.7px;height:12px;line-height:12px;font-size:10px;color:#555;width:20px;font-family:'Liberation Sans',sans-serif;text-align:center;letter-spacing:-0.3px;">48</div>
<svg class="r" style="left:685px;top:160px;" width="11" height="28" viewBox="0 0 11 28"><path d="M0.5 0.5H10.5V4.500L5.500 9.500L0.500 4.500z" fill="#fff" stroke="#8a8a8a" stroke-width="1"/><path d="M5.500 10L10.500 15V21H0.500V15z" fill="#fff" stroke="#8a8a8a" stroke-width="1"/><path d="M0.500 21H10.500V27.500H0.500z" fill="#fff" stroke="#8a8a8a" stroke-width="1"/></svg>
<svg class="r" style="left:1114px;top:172px;" width="11" height="10" viewBox="0 0 11 10"><path d="M5.500 0.500L10.500 5.500V9.500H0.500V5.500z" fill="#fff" stroke="#8a8a8a" stroke-width="1"/></svg>
<div class="r" style="left:500px;top:188px;width:17px;height:61px;background:#c8c8c8;"></div>
<div class="r" style="left:500px;top:249px;width:17px;height:660px;background:#fff;"></div>
<div class="r" style="left:500px;top:909px;width:17px;height:70px;background:#c8c8c8;"></div>
<div class="r" style="left:500px;top:188px;width:17px;height:791px;overflow:hidden;"><svg class="r" style="left:-500px;top:-188px;" width="520" height="980" viewBox="0 0 520 980"><text transform="translate(513.700 189.8) rotate(-90)" text-anchor="middle" font-size="10" fill="#555" font-family="Liberation Sans,sans-serif" letter-spacing="-0.3">4</text><text transform="translate(513.700 219.3) rotate(-90)" text-anchor="middle" font-size="10" fill="#555" font-family="Liberation Sans,sans-serif" letter-spacing="-0.3">2</text><text transform="translate(513.700 278.1) rotate(-90)" text-anchor="middle" font-size="10" fill="#555" font-family="Liberation Sans,sans-serif" letter-spacing="-0.3">2</text><text transform="translate(513.700 307.6) rotate(-90)" text-anchor="middle" font-size="10" fill="#555" font-family="Liberation Sans,sans-serif" letter-spacing="-0.3">4</text><text transform="translate(513.700 337.0) rotate(-90)" text-anchor="middle" font-size="10" fill="#555" font-family="Liberation Sans,sans-serif" letter-spacing="-0.3">6</text><text transform="translate(513.700 366.5) rotate(-90)" text-anchor="middle" font-size="10" fill="#555" font-family="Liberation Sans,sans-serif" letter-spacing="-0.3">8</text><text transform="translate(513.700 395.9) rotate(-90)" text-anchor="middle" font-size="10" fill="#555" font-family="Liberation Sans,sans-serif" letter-spacing="-0.3">10</text><text transform="translate(513.700 425.3) rotate(-90)" text-anchor="middle" font-size="10" fill="#555" font-family="Liberation Sans,sans-serif" letter-spacing="-0.3">12</text><text transform="translate(513.700 454.8) rotate(-90)" text-anchor="middle" font-size="10" fill="#555" font-family="Liberation Sans,sans-serif" letter-spacing="-0.3">14</text><text transform="translate(513.700 484.2) rotate(-90)" text-anchor="middle" font-size="10" fill="#555" font-family="Liberation Sans,sans-serif" letter-spacing="-0.3">16</text><text transform="translate(513.700 513.7) rotate(-90)" text-anchor="middle" font-size="10" fill="#555" font-family="Liberation Sans,sans-serif" letter-spacing="-0.3">18</text><text transform="translate(513.700 543.1) rotate(-90)" text-anchor="middle" font-size="10" fill="#555" font-family="Liberation Sans,sans-serif" letter-spacing="-0.3">20</text><text transform="translate(513.700 572.5) rotate(-90)" text-anchor="middle" font-size="10" fill="#555" font-family="Liberation Sans,sans-serif" letter-spacing="-0.3">22</text><text transform="translate(513.700 602.0) rotate(-90)" text-anchor="middle" font-size="10" fill="#555" font-family="Liberation Sans,sans-serif" letter-spacing="-0.3">24</text><text transform="translate(513.700 631.4) rotate(-90)" text-anchor="middle" font-size="10" fill="#555" font-family="Liberation Sans,sans-serif" letter-spacing="-0.3">26</text><text transform="translate(513.700 660.9) rotate(-90)" text-anchor="middle" font-size="10" fill="#555" font-family="Liberation Sans,sans-serif" letter-spacing="-0.3">28</text><text transform="translate(513.700 690.3) rotate(-90)" text-anchor="middle" font-size="10" fill="#555" font-family="Liberation Sans,sans-serif" letter-spacing="-0.3">30</text><text transform="translate(513.700 719.7) rotate(-90)" text-anchor="middle" font-size="10" fill="#555" font-family="Liberation Sans,sans-serif" letter-spacing="-0.3">32</text><text transform="translate(513.700 749.2) rotate(-90)" text-anchor="middle" font-size="10" fill="#555" font-family="Liberation Sans,sans-serif" letter-spacing="-0.3">34</text><text transform="translate(513.700 778.6) rotate(-90)" text-anchor="middle" font-size="10" fill="#555" font-family="Liberation Sans,sans-serif" letter-spacing="-0.3">36</text><text transform="translate(513.700 808.1) rotate(-90)" text-anchor="middle" font-size="10" fill="#555" font-family="Liberation Sans,sans-serif" letter-spacing="-0.3">38</text><text transform="translate(513.700 837.5) rotate(-90)" text-anchor="middle" font-size="10" fill="#555" font-family="Liberation Sans,sans-serif" letter-spacing="-0.3">40</text><text transform="translate(513.700 866.9) rotate(-90)" text-anchor="middle" font-size="10" fill="#555" font-family="Liberation Sans,sans-serif" letter-spacing="-0.3">42</text><text transform="translate(513.700 896.4) rotate(-90)" text-anchor="middle" font-size="10" fill="#555" font-family="Liberation Sans,sans-serif" letter-spacing="-0.3">44</text><text transform="translate(513.700 925.8) rotate(-90)" text-anchor="middle" font-size="10" fill="#555" font-family="Liberation Sans,sans-serif" letter-spacing="-0.3">46</text><text transform="translate(513.700 955.3) rotate(-90)" text-anchor="middle" font-size="10" fill="#555" font-family="Liberation Sans,sans-serif" letter-spacing="-0.3">48</text></svg></div>
<div class="r" style="left:625px;top:188px;width:562px;height:789px;background:#fff;border:1px solid #c6c6c6;border-top:none;"></div>
<div class="r" style="left:1199px;top:188px;width:562px;height:789px;background:#fff;border:1px solid #c6c6c6;border-top:none;"></div>
<div class="r" style="left:1773px;top:188px;width:12px;height:789px;background:#fff;border:1px solid #c6c6c6;border-top:none;"></div>
<div class="r" style="left:562px;top:987px;width:795px;height:40px;background:#fff;border:1px solid #c6c6c6;"></div>
<div class="r" style="left:1369px;top:987px;width:430px;height:40px;background:#fff;border:1px solid #c6c6c6;"></div>
<div class="t " style="left:832px;top:221.1px;height:15.9px;line-height:15.9px;font-size:9.9px;color:#777;font-family:'Noto Sans CJK SC',sans-serif;letter-spacing:0.0px;">盘锦埴泽工贸有限公司—投标文件<span style="color:#999;font-size:8.5px;font-family:'DejaVu Sans',sans-serif;">↵</span></div>
<svg class="r" style="left:0px;top:0px;" width="1" height="1" viewBox="0 0 1 1"><path d="M691.5 231V247.500H675M691.5 235.500H1120.5M1120.5 231V247.500H1137" fill="none" stroke="#8c8c8c" stroke-width="1"/><path d="M675.5 910.500H691.5V927M1136.5 910.500H1120.5V927" fill="none" stroke="#8c8c8c" stroke-width="1"/></svg>
<svg class="r" style="left:0px;top:0px;" width="1" height="1" viewBox="0 0 1 1"><path d="M852 232.200l2.050 2.600l2.050 -2.600l2.050 2.600l2.050 -2.600l2.050 2.600" fill="none" stroke="#e02020" stroke-width="0.900"/></svg>
<div class="r" style="left:686px;top:257.8px;width:3px;height:3px;background:#000;"></div>
<div class="t " style="left:692px;top:248.8px;height:16px;line-height:16px;font-size:12.5px;color:#000;font-family:'Liberation Serif','Noto Serif CJK SC',serif;font-weight:bold;letter-spacing:0.8px;">1.3.7.6</div>
<div class="t " style="left:751.8px;top:249.2px;height:16px;line-height:16px;font-size:11.3px;color:#000;font-family:'Liberation Serif','Noto Serif CJK SC',serif;font-weight:bold;">产品执行标准<span style="color:#999;font-weight:normal;font-size:10px;font-family:'DejaVu Sans',sans-serif;">↵</span></div>
<div class="r" style="left:686px;top:357.0px;width:3px;height:3px;background:#000;"></div>
<div class="t " style="left:692px;top:348.0px;height:16px;line-height:16px;font-size:12.5px;color:#000;font-family:'Liberation Serif','Noto Serif CJK SC',serif;font-weight:bold;letter-spacing:0.8px;">1.3.7.7</div>
<div class="t " style="left:751.8px;top:348.4px;height:16px;line-height:16px;font-size:11.3px;color:#000;font-family:'Liberation Serif','Noto Serif CJK SC',serif;font-weight:bold;">营业执照<span style="color:#999;font-weight:normal;font-size:10px;font-family:'DejaVu Sans',sans-serif;">↵</span></div>
<div class="r" style="left:686px;top:398.6px;width:3px;height:3px;background:#000;"></div>
<div class="t " style="left:692px;top:389.6px;height:16px;line-height:16px;font-size:12.5px;color:#000;font-family:'Liberation Serif','Noto Serif CJK SC',serif;font-weight:bold;letter-spacing:0.8px;">1.3.7.8</div>
<div class="t " style="left:751.8px;top:390.0px;height:16px;line-height:16px;font-size:11.3px;color:#000;font-family:'Liberation Serif','Noto Serif CJK SC',serif;font-weight:bold;">生产许可证<span style="color:#999;font-weight:normal;font-size:10px;font-family:'DejaVu Sans',sans-serif;">↵</span></div>
<div class="r" style="left:686px;top:440.0px;width:3px;height:3px;background:#000;"></div>
<div class="t " style="left:692px;top:431.0px;height:16px;line-height:16px;font-size:12.5px;color:#000;font-family:'Liberation Serif','Noto Serif CJK SC',serif;font-weight:bold;letter-spacing:0.8px;">1.3.7.9</div>
<div class="t " style="left:751.8px;top:431.4px;height:16px;line-height:16px;font-size:11.3px;color:#000;font-family:'Liberation Serif','Noto Serif CJK SC',serif;font-weight:bold;">授权书<span style="color:#999;font-weight:normal;font-size:10px;font-family:'DejaVu Sans',sans-serif;">↵</span></div>
<div class="r" style="left:686px;top:481.0px;width:3px;height:3px;background:#000;"></div>
<div class="t " style="left:692px;top:472.0px;height:16px;line-height:16px;font-size:12.5px;color:#000;font-family:'Liberation Serif','Noto Serif CJK SC',serif;font-weight:bold;letter-spacing:0.8px;">1.3.7.10</div>
<div class="t " style="left:751.8px;top:472.4px;height:16px;line-height:16px;font-size:11.3px;color:#000;font-family:'Liberation Serif','Noto Serif CJK SC',serif;font-weight:bold;">商标注册证<span style="color:#999;font-weight:normal;font-size:10px;font-family:'DejaVu Sans',sans-serif;">↵</span></div>
<div class="r" style="left:686px;top:522.4px;width:3px;height:3px;background:#000;"></div>
<div class="t " style="left:692px;top:513.4px;height:16px;line-height:16px;font-size:12.5px;color:#000;font-family:'Liberation Serif','Noto Serif CJK SC',serif;font-weight:bold;letter-spacing:0.8px;">1.3.7.11</div>
<div class="t " style="left:751.8px;top:513.8px;height:16px;line-height:16px;font-size:11.3px;color:#000;font-family:'Liberation Serif','Noto Serif CJK SC',serif;font-weight:bold;">检验报告<span style="color:#999;font-weight:normal;font-size:10px;font-family:'DejaVu Sans',sans-serif;">↵</span></div>
<div class="r" style="left:686px;top:563.8px;width:3px;height:3px;background:#000;"></div>
<div class="t " style="left:692px;top:554.8px;height:16px;line-height:16px;font-size:12.5px;color:#000;font-family:'Liberation Serif','Noto Serif CJK SC',serif;font-weight:bold;letter-spacing:0.8px;">1.3.7.12</div>
<div class="t " style="left:751.8px;top:555.2px;height:16px;line-height:16px;font-size:11.3px;color:#000;font-family:'Liberation Serif','Noto Serif CJK SC',serif;font-weight:bold;">产品执行标准<span style="color:#999;font-weight:normal;font-size:10px;font-family:'DejaVu Sans',sans-serif;">↵</span></div>
<div class="r" style="left:686px;top:605.0999999999999px;width:3px;height:3px;background:#000;"></div>
<div class="t " style="left:692px;top:596.1px;height:16px;line-height:16px;font-size:12.5px;color:#000;font-family:'Liberation Serif','Noto Serif CJK SC',serif;font-weight:bold;letter-spacing:0.8px;">1.3.7.13</div>
<div class="t " style="left:751.8px;top:596.5px;height:16px;line-height:16px;font-size:11.3px;color:#000;font-family:'Liberation Serif','Noto Serif CJK SC',serif;font-weight:bold;">营业执照<span style="color:#999;font-weight:normal;font-size:10px;font-family:'DejaVu Sans',sans-serif;">↵</span></div>
<div class="r" style="left:686px;top:646.5px;width:3px;height:3px;background:#000;"></div>
<div class="t " style="left:692px;top:637.5px;height:16px;line-height:16px;font-size:12.5px;color:#000;font-family:'Liberation Serif','Noto Serif CJK SC',serif;font-weight:bold;letter-spacing:0.8px;">1.3.7.14</div>
<div class="t " style="left:751.8px;top:637.9px;height:16px;line-height:16px;font-size:11.3px;color:#000;font-family:'Liberation Serif','Noto Serif CJK SC',serif;font-weight:bold;">生产许可证<span style="color:#999;font-weight:normal;font-size:10px;font-family:'DejaVu Sans',sans-serif;">↵</span></div>
<div class="r" style="left:686px;top:687.8px;width:3px;height:3px;background:#000;"></div>
<div class="t " style="left:692px;top:678.8px;height:16px;line-height:16px;font-size:12.5px;color:#000;font-family:'Liberation Serif','Noto Serif CJK SC',serif;font-weight:bold;letter-spacing:0.8px;">1.3.7.15</div>
<div class="t " style="left:751.8px;top:679.2px;height:16px;line-height:16px;font-size:11.3px;color:#000;font-family:'Liberation Serif','Noto Serif CJK SC',serif;font-weight:bold;">授权书<span style="color:#999;font-weight:normal;font-size:10px;font-family:'DejaVu Sans',sans-serif;">↵</span></div>
<div class="r" style="left:686px;top:729.0999999999999px;width:3px;height:3px;background:#000;"></div>
<div class="t " style="left:692px;top:720.1px;height:16px;line-height:16px;font-size:12.5px;color:#000;font-family:'Liberation Serif','Noto Serif CJK SC',serif;font-weight:bold;letter-spacing:0.8px;">1.3.7.16</div>
<div class="t " style="left:751.8px;top:720.5px;height:16px;line-height:16px;font-size:11.3px;color:#000;font-family:'Liberation Serif','Noto Serif CJK SC',serif;font-weight:bold;">商标注册证<span style="color:#999;font-weight:normal;font-size:10px;font-family:'DejaVu Sans',sans-serif;">↵</span></div>
<div class="r" style="left:686px;top:770.5px;width:3px;height:3px;background:#000;"></div>
<div class="t " style="left:692px;top:761.5px;height:16px;line-height:16px;font-size:12.5px;color:#000;font-family:'Liberation Serif','Noto Serif CJK SC',serif;font-weight:bold;letter-spacing:0.8px;">1.3.7.17</div>
<div class="t " style="left:751.8px;top:761.9px;height:16px;line-height:16px;font-size:11.3px;color:#000;font-family:'Liberation Serif','Noto Serif CJK SC',serif;font-weight:bold;">检验报告<span style="color:#999;font-weight:normal;font-size:10px;font-family:'DejaVu Sans',sans-serif;">↵</span></div>
<div class="r" style="left:686px;top:811.8px;width:3px;height:3px;background:#000;"></div>
<div class="t " style="left:692px;top:802.8px;height:16px;line-height:16px;font-size:12.5px;color:#000;font-family:'Liberation Serif','Noto Serif CJK SC',serif;font-weight:bold;letter-spacing:0.8px;">1.3.7.18</div>
<div class="t " style="left:751.8px;top:803.2px;height:16px;line-height:16px;font-size:11.3px;color:#000;font-family:'Liberation Serif','Noto Serif CJK SC',serif;font-weight:bold;">产品执行标准<span style="color:#999;font-weight:normal;font-size:10px;font-family:'DejaVu Sans',sans-serif;">↵</span></div>
<div class="r" style="left:686px;top:853.0999999999999px;width:3px;height:3px;background:#000;"></div>
<div class="t " style="left:692px;top:844.1px;height:16px;line-height:16px;font-size:12.5px;color:#000;font-family:'Liberation Serif','Noto Serif CJK SC',serif;font-weight:bold;letter-spacing:0.8px;">1.3.7.19</div>
<div class="t " style="left:751.8px;top:844.5px;height:16px;line-height:16px;font-size:11.3px;color:#000;font-family:'Liberation Serif','Noto Serif CJK SC',serif;font-weight:bold;">营业执照<span style="color:#999;font-weight:normal;font-size:10px;font-family:'DejaVu Sans',sans-serif;">↵</span></div>
<div class="t " style="left:691.5px;top:272.9px;height:12px;line-height:12px;font-size:10px;color:#999;font-family:'DejaVu Sans',sans-serif;">↵</div>
<div class="t " style="left:691.5px;top:292.4px;height:12px;line-height:12px;font-size:10px;color:#999;font-family:'DejaVu Sans',sans-serif;">↵</div>
<div class="t " style="left:691.5px;top:311.6px;height:12px;line-height:12px;font-size:10px;color:#999;font-family:'DejaVu Sans',sans-serif;">↵</div>
<div class="t " style="left:691.5px;top:330.7px;height:12px;line-height:12px;font-size:10px;color:#999;font-family:'DejaVu Sans',sans-serif;">↵</div>
<div class="t " style="left:691.5px;top:372.3px;height:12px;line-height:12px;font-size:10px;color:#999;font-family:'DejaVu Sans',sans-serif;">↵</div>
<div class="t " style="left:691.5px;top:413.9px;height:12px;line-height:12px;font-size:10px;color:#999;font-family:'DejaVu Sans',sans-serif;">↵</div>
<div class="t " style="left:691.5px;top:455.3px;height:12px;line-height:12px;font-size:10px;color:#999;font-family:'DejaVu Sans',sans-serif;">↵</div>
<div class="t " style="left:691.5px;top:496.3px;height:12px;line-height:12px;font-size:10px;color:#999;font-family:'DejaVu Sans',sans-serif;">↵</div>
<div class="t " style="left:691.5px;top:537.7px;height:12px;line-height:12px;font-size:10px;color:#999;font-family:'DejaVu Sans',sans-serif;">↵</div>
<div class="t " style="left:691.5px;top:579.1px;height:12px;line-height:12px;font-size:10px;color:#999;font-family:'DejaVu Sans',sans-serif;">↵</div>
<div class="t " style="left:691.5px;top:620.4px;height:12px;line-height:12px;font-size:10px;color:#999;font-family:'DejaVu Sans',sans-serif;">↵</div>
<div class="t " style="left:691.5px;top:661.8px;height:12px;line-height:12px;font-size:10px;color:#999;font-family:'DejaVu Sans',sans-serif;">↵</div>
<div class="t " style="left:691.5px;top:703.1px;height:12px;line-height:12px;font-size:10px;color:#999;font-family:'DejaVu Sans',sans-serif;">↵</div>
<div class="t " style="left:691.5px;top:744.4px;height:12px;line-height:12px;font-size:10px;color:#999;font-family:'DejaVu Sans',sans-serif;">↵</div>
<div class="t " style="left:691.5px;top:785.8px;height:12px;line-height:12px;font-size:10px;color:#999;font-family:'DejaVu Sans',sans-serif;">↵</div>
<div class="t " style="left:691.5px;top:827.1px;height:12px;line-height:12px;font-size:10px;color:#999;font-family:'DejaVu Sans',sans-serif;">↵</div>
<div class="t " style="left:691.5px;top:868.4px;height:12px;line-height:12px;font-size:10px;color:#999;font-family:'DejaVu Sans',sans-serif;">↵</div>
<div class="t " style="left:897.7px;top:920.7px;height:10px;line-height:10px;font-size:7.5px;color:#6e6e6e;font-family:'Liberation Sans',sans-serif;">1858<span style="font-size:7.5px;color:#aaa;font-family:'DejaVu Sans',sans-serif;">↵</span></div>
<div class="t " style="left:1406px;top:221.1px;height:15.9px;line-height:15.9px;font-size:9.9px;color:#777;font-family:'Noto Sans CJK SC',sans-serif;letter-spacing:0.0px;">盘锦埴泽工贸有限公司—投标文件<span style="color:#999;font-size:8.5px;font-family:'DejaVu Sans',sans-serif;">↵</span></div>
<svg class="r" style="left:0px;top:0px;" width="1" height="1" viewBox="0 0 1 1"><path d="M1265.5 231V247.500H1249M1265.5 235.500H1694.5M1694.5 231V247.500H1711" fill="none" stroke="#8c8c8c" stroke-width="1"/><path d="M1249.5 910.500H1265.5V927M1710.5 910.500H1694.5V927" fill="none" stroke="#8c8c8c" stroke-width="1"/></svg>
<svg class="r" style="left:0px;top:0px;" width="1" height="1" viewBox="0 0 1 1"><path d="M1426 232.200l2.050 2.600l2.050 -2.600l2.050 2.600l2.050 -2.600l2.050 2.600" fill="none" stroke="#e02020" stroke-width="0.900"/></svg>
<div class="r" style="left:1260px;top:257.8px;width:3px;height:3px;background:#000;"></div>
<div class="t " style="left:1266px;top:248.8px;height:16px;line-height:16px;font-size:12.5px;color:#000;font-family:'Liberation Serif','Noto Serif CJK SC',serif;font-weight:bold;letter-spacing:0.8px;">1.3.7.20</div>
<div class="t " style="left:1325.8px;top:249.2px;height:16px;line-height:16px;font-size:11.3px;color:#000;font-family:'Liberation Serif','Noto Serif CJK SC',serif;font-weight:bold;">生产许可证<span style="color:#999;font-weight:normal;font-size:10px;font-family:'DejaVu Sans',sans-serif;">↵</span></div>
<div class="r" style="left:1260px;top:299.1px;width:3px;height:3px;background:#000;"></div>
<div class="t " style="left:1266px;top:290.1px;height:16px;line-height:16px;font-size:12.5px;color:#000;font-family:'Liberation Serif','Noto Serif CJK SC',serif;font-weight:bold;letter-spacing:0.8px;">1.3.7.21</div>
<div class="t " style="left:1325.8px;top:290.5px;height:16px;line-height:16px;font-size:11.3px;color:#000;font-family:'Liberation Serif','Noto Serif CJK SC',serif;font-weight:bold;">授权书<span style="color:#999;font-weight:normal;font-size:10px;font-family:'DejaVu Sans',sans-serif;">↵</span></div>
<div class="r" style="left:1260px;top:340.5px;width:3px;height:3px;background:#000;"></div>
<div class="t " style="left:1266px;top:331.5px;height:16px;line-height:16px;font-size:12.5px;color:#000;font-family:'Liberation Serif','Noto Serif CJK SC',serif;font-weight:bold;letter-spacing:0.8px;">1.3.7.22</div>
<div class="t " style="left:1325.8px;top:331.9px;height:16px;line-height:16px;font-size:11.3px;color:#000;font-family:'Liberation Serif','Noto Serif CJK SC',serif;font-weight:bold;">商标注册证<span style="color:#999;font-weight:normal;font-size:10px;font-family:'DejaVu Sans',sans-serif;">↵</span></div>
<div class="r" style="left:1260px;top:381.8px;width:3px;height:3px;background:#000;"></div>
<div class="t " style="left:1266px;top:372.8px;height:16px;line-height:16px;font-size:12.5px;color:#000;font-family:'Liberation Serif','Noto Serif CJK SC',serif;font-weight:bold;letter-spacing:0.8px;">1.3.7.23</div>
<div class="t " style="left:1325.8px;top:373.2px;height:16px;line-height:16px;font-size:11.3px;color:#000;font-family:'Liberation Serif','Noto Serif CJK SC',serif;font-weight:bold;">检验报告<span style="color:#999;font-weight:normal;font-size:10px;font-family:'DejaVu Sans',sans-serif;">↵</span></div>
<div class="r" style="left:1260px;top:423.1px;width:3px;height:3px;background:#000;"></div>
<div class="t " style="left:1266px;top:414.1px;height:16px;line-height:16px;font-size:12.5px;color:#000;font-family:'Liberation Serif','Noto Serif CJK SC',serif;font-weight:bold;letter-spacing:0.8px;">1.3.7.24</div>
<div class="t " style="left:1325.8px;top:414.5px;height:16px;line-height:16px;font-size:11.3px;color:#000;font-family:'Liberation Serif','Noto Serif CJK SC',serif;font-weight:bold;">产品执行标准<span style="color:#999;font-weight:normal;font-size:10px;font-family:'DejaVu Sans',sans-serif;">↵</span></div>
<div class="t " style="left:1265.5px;top:273.1px;height:12px;line-height:12px;font-size:10px;color:#999;font-family:'DejaVu Sans',sans-serif;">↵</div>
<div class="t " style="left:1265.5px;top:314.4px;height:12px;line-height:12px;font-size:10px;color:#999;font-family:'DejaVu Sans',sans-serif;">↵</div>
<div class="t " style="left:1265.5px;top:355.8px;height:12px;line-height:12px;font-size:10px;color:#999;font-family:'DejaVu Sans',sans-serif;">↵</div>
<div class="t " style="left:1265.5px;top:397.1px;height:12px;line-height:12px;font-size:10px;color:#999;font-family:'DejaVu Sans',sans-serif;">↵</div>
<div class="t " style="left:1265.5px;top:438.4px;height:12px;line-height:12px;font-size:10px;color:#999;font-family:'DejaVu Sans',sans-serif;">↵</div>
<div class="t " style="left:1265.5px;top:457.4px;height:12px;line-height:12px;font-size:10px;color:#999;font-family:'DejaVu Sans',sans-serif;">↵</div>
<div class="t " style="left:1471.7px;top:920.7px;height:10px;line-height:10px;font-size:7.5px;color:#6e6e6e;font-family:'Liberation Sans',sans-serif;">1859<span style="font-size:7.5px;color:#aaa;font-family:'DejaVu Sans',sans-serif;">↵</span></div>
<div class="t " style="left:1401px;top:483.2px;height:14px;line-height:14px;font-size:11.5px;color:#8a8a8a;font-family:'DejaVu Sans',sans-serif;">↵</div>
<div class="r" style="left:0px;top:1017px;width:1780px;height:21px;background:#f3f3f3;"></div>
<div class="r" style="left:0px;top:1017px;width:1780px;height:1px;background:#c8c8c8;"></div>
<div class="r" style="left:0px;top:1037px;width:1780px;height:1px;background:#1e2a38;"></div>
<div class="r" style="left:241px;top:1037px;width:48px;height:1px;background:#c9783a;"></div>
<div class="t " style="left:11px;top:1019.7px;height:18px;line-height:18px;font-size:12px;color:#444;letter-spacing:0.32px;">第 1858 页，共 1909 页</div>
<div class="t " style="left:162px;top:1019.7px;height:18px;line-height:18px;font-size:12px;color:#444;letter-spacing:0.4px;">29130 个字</div>
<svg class="r" style="left:245px;top:1021px;" width="15" height="13" viewBox="0 0 15 13"><path d="M6.500 2.200V12M6.500 2.200Q4 0.800 0.800 1V10.500Q4 10.300 6.500 12" fill="none" stroke="#666" stroke-width="1"/><path d="M6.500 2.200Q7.500 1.300 9 1M6.500 12Q9 10.300 12 10.500V8.500" fill="none" stroke="#666" stroke-width="1"/><path d="M9.800 2.500L13.500 6.500M13.500 2.500L9.800 6.500" fill="none" stroke="#666" stroke-width="1"/></svg>
<div class="t " style="left:276px;top:1019.7px;height:18px;line-height:18px;font-size:12px;color:#444;letter-spacing:0.1px;">简体中文(中国大陆)</div>
<div class="t " style="left:398px;top:1019.7px;height:18px;line-height:18px;font-size:12px;color:#444;">修订: 关闭</div>
<svg class="r" style="left:471px;top:1020px;" width="17" height="16" viewBox="0 0 17 16"><path d="M9.200 2.200A5.700 5.700 0 1 0 11.500 11.800" fill="none" stroke="#555" stroke-width="1.200" stroke-dasharray="2.600 1.600"/><path d="M7.500 3V8.500L10 10" fill="none" stroke="#555" stroke-width="1.200"/><path d="M9.500 9.500L15.500 15M15.500 9.500L9.500 15" fill="none" stroke="#333" stroke-width="1.600"/></svg>
<div class="t " style="left:491px;top:1019.7px;height:18px;line-height:18px;font-size:12px;color:#333;font-weight:bold;letter-spacing:-0.3px;">辅助功能: 调查</div>
</body></html>
